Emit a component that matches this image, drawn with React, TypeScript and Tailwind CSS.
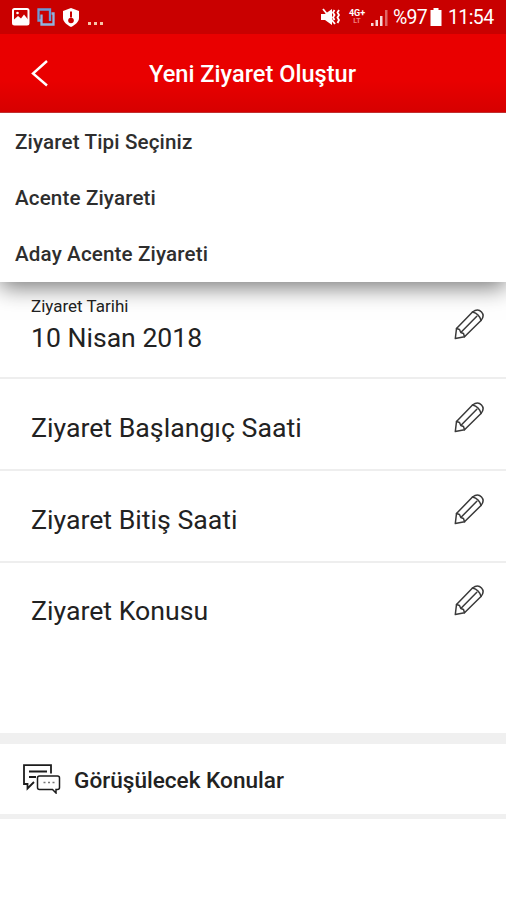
import { useState } from "react";

interface Field {
    id: number;
    label: string;
    value?: string;
    className: string;
}

const visitTypes = ["Ziyaret Tipi Seçiniz", "Acente Ziyareti", "Aday Acente Ziyareti"];

const fields: Field[] = [
    { id: 1, label: "Ziyaret Tarihi", value: "10 Nisan 2018", className: "h-[97px] pt-[15px] border-b-2" },
    { id: 2, label: "Ziyaret Başlangıç Saati", className: "h-[92px] pt-[33px] border-b-2" },
    { id: 3, label: "Ziyaret Bitiş Saati", className: "h-[92px] pt-[33px] border-b-2" },
    { id: 4, label: "Ziyaret Konusu", className: "h-[170px] pt-[32px]" },
];

const PencilIcon = () => (
    <svg width="30" height="31" viewBox="0 0 30 31" fill="none" stroke="#3a3a3a" strokeWidth="1.5" strokeLinejoin="round" strokeLinecap="round">
        <path d="M1.300 29.500 2.500 19.500 18.500 3C22 .3 25.500.8 27.500 3s2 5.500-.5 8.500L10.500 27.800Z" />
        <path d="M2.500 19.500 5.500 20.500 6.800 23.500 9.500 24.500 10.500 27.800M6.800 23.500 22.800 7.300M18.500 3C22.500 4 26 7.500 27 11.500" />
    </svg>
);

const ChatIcon = () => (
    <svg width="38" height="30" viewBox="0 0 38 30" fill="none" stroke="#1c1c1c" strokeWidth="1.8">
        <path d="M28 9.500V1.200H1V20h3.500v4.500L11 18" />
        <path d="M6 7.500h18M6 13h7" strokeWidth="2" />
        <path d="M16.500 12h18q2 0 2 2v9.500q0 2-2 2H33V29l-3.500-3.500h-13q-2 0-2-2V14q0-2 2-2Z" strokeWidth="1.500" />
        <path d="M20.500 18.500h2M25 18.500h2M29.500 18.500h2" stroke="#777" strokeWidth="1.500" />
    </svg>
);

const StatusBar = () => (
    <div className="h-[34px] bg-[#c90000] flex items-center text-white pl-[12px] pr-[12px]">
        <svg width="18" height="18" viewBox="0 0 18 18">
            <rect x="1" y="1" width="15.500" height="15.500" rx="1.500" fill="none" stroke="#fff" strokeWidth="2" />
            <path d="M2 11.500 6 8l3 2.500 3-4 4 5V16H2Z" fill="#fff" />
            <circle cx="5.500" cy="5" r="1.300" fill="#fff" />
        </svg>
        <svg className="ml-[7px]" width="18" height="18" viewBox="0 0 18 18" fill="none" strokeWidth="2.300">
            <path d="M4 12.500H1.500V1.500h11.500V13" stroke="#6b9bd8" />
            <path d="M4.500 6.500v10h12v-11h-2" stroke="#8fb4e0" />
        </svg>
        <svg className="ml-[8px]" width="16" height="19" viewBox="0 0 16 19">
            <path d="M8 0 16 3v7c0 4-4 7-8 9-4-2-8-5-8-9V3Z" fill="#fff" />
            <path d="M8 3.500v6" stroke="#c90000" strokeWidth="2" />
            <circle cx="8" cy="12.500" r="2.800" fill="#c90000" />
        </svg>
        <div className="flex gap-[3px] ml-[9px] mt-[12px]">
            <span className="size-[3px] bg-[#f6c4a8]" />
            <span className="size-[3px] bg-[#f6c4a8]" />
            <span className="size-[3px] bg-[#f6c4a8]" />
        </div>
        <div className="ml-auto flex items-center">
            <svg className="mr-[2px]" width="20" height="18" viewBox="0 0 20 18" fill="none" stroke="#fff">
                <path d="M0 6h4l7-5v16l-7-5H0Z" fill="#fff" stroke="none" />
                <path d="m2 1 12 15" strokeWidth="1.800" />
                <path d="m13.500 2-1.500 2.500L13.500 7 12 9.500l1.500 2.500M18 2l-1.500 2.500L18 7l-1.500 2.500L18 12l-1.500 3" strokeWidth="1.800" />
            </svg>
            <div className="w-[18px] ml-[5px] flex flex-col items-center font-bold">
                <span className="text-[9px] leading-[8px]">4G+</span>
                <span className="text-[7px] leading-[8px] text-[#f08080]">LT</span>
            </div>
            <svg className="ml-[5px]" width="17" height="17" viewBox="0 0 17 17" fill="#fff">
                <path d="M0 14h2.500v3H0ZM4.500 11h2.500v6H4.500ZM9 7h2.500v10H9Z" opacity=".85" />
                <path d="M14 1h2.500v16H14Z" opacity=".4" />
            </svg>
            <span className="ml-[5px] text-[19.5px] leading-[34px] w-[35px] whitespace-nowrap tracking-[-0.8px] pt-[2px]">%97</span>
            <svg className="ml-[2px]" width="12" height="18" viewBox="0 0 11 18" fill="#fff">
                <path d="M3 0h5v2h3v16H0V2h3Z" />
            </svg>
            <span className="ml-[6px] text-[19.5px] leading-[34px] w-[46px] whitespace-nowrap tracking-[-0.6px] pt-[2px]">11:54</span>
        </div>
    </div>
);

export default function App() {
    const [selected, setSelected] = useState(visitTypes[0]);

    return (
        <div className="w-[506px] h-[900px] bg-white overflow-hidden font-[Roboto,sans-serif] text-[#222]">
            <StatusBar />
            <header className="relative z-10 h-[79px] bg-linear-to-b from-[#e90000] from-60% to-[#d60000] border-b border-[#c03030] flex items-center text-white">
                <svg className="ml-[31px] shrink-0" width="18" height="28" viewBox="0 0 18 28" fill="none" stroke="#fff" strokeWidth="2.400">
                    <path d="M16 2 2 14.500 16 26.500" />
                </svg>
                <h1 className="ml-[100px] text-[23.6px] font-medium whitespace-nowrap pt-[4px]">Yeni Ziyaret Oluştur</h1>
            </header>
            <ul className="relative h-[169px] bg-white shadow-[0_5px_22px_rgba(0,0,0,0.550)]">
                {visitTypes.map((type) => (
                    <li key={type} className="h-[56px] pt-[2px] pl-[15px] flex items-center">
                        <button
                            onClick={() => setSelected(type)}
                            aria-pressed={selected === type}
                            className="text-[20.6px] tracking-[0.14px] font-medium text-[#2e2e2e] whitespace-nowrap"
                        >
                            {type}
                        </button>
                    </li>
                ))}
            </ul>
            <main>
                {fields.map((field) => (
                    <section key={field.id} className={`flex justify-between pl-[31px] pr-[22px] border-[#eee] ${field.className}`}>
                        {field.value ? (
                            <div>
                                <p className="text-[17px] leading-[18px]">{field.label}</p>
                                <p className="text-[26.6px] leading-[32px] mt-[7px] whitespace-nowrap">{field.value}</p>
                            </div>
                        ) : (
                            <p className="text-[26.7px] leading-[32px] whitespace-nowrap">{field.label}</p>
                        )}
                        <button className={field.value ? "h-[31px] mt-[12px]" : "h-[31px] mt-[-10px]"}>
                            <PencilIcon />
                        </button>
                    </section>
                ))}
                <section className="h-[86px] border-t-[11px] border-b-[5px] border-[#f0f0f0] flex items-center pl-[23px]">
                    <ChatIcon />
                    <h2 className="ml-[13px] text-[22.6px] font-medium whitespace-nowrap pt-[4px]">Görüşülecek Konular</h2>
                </section>
            </main>
        </div>
    );
}
